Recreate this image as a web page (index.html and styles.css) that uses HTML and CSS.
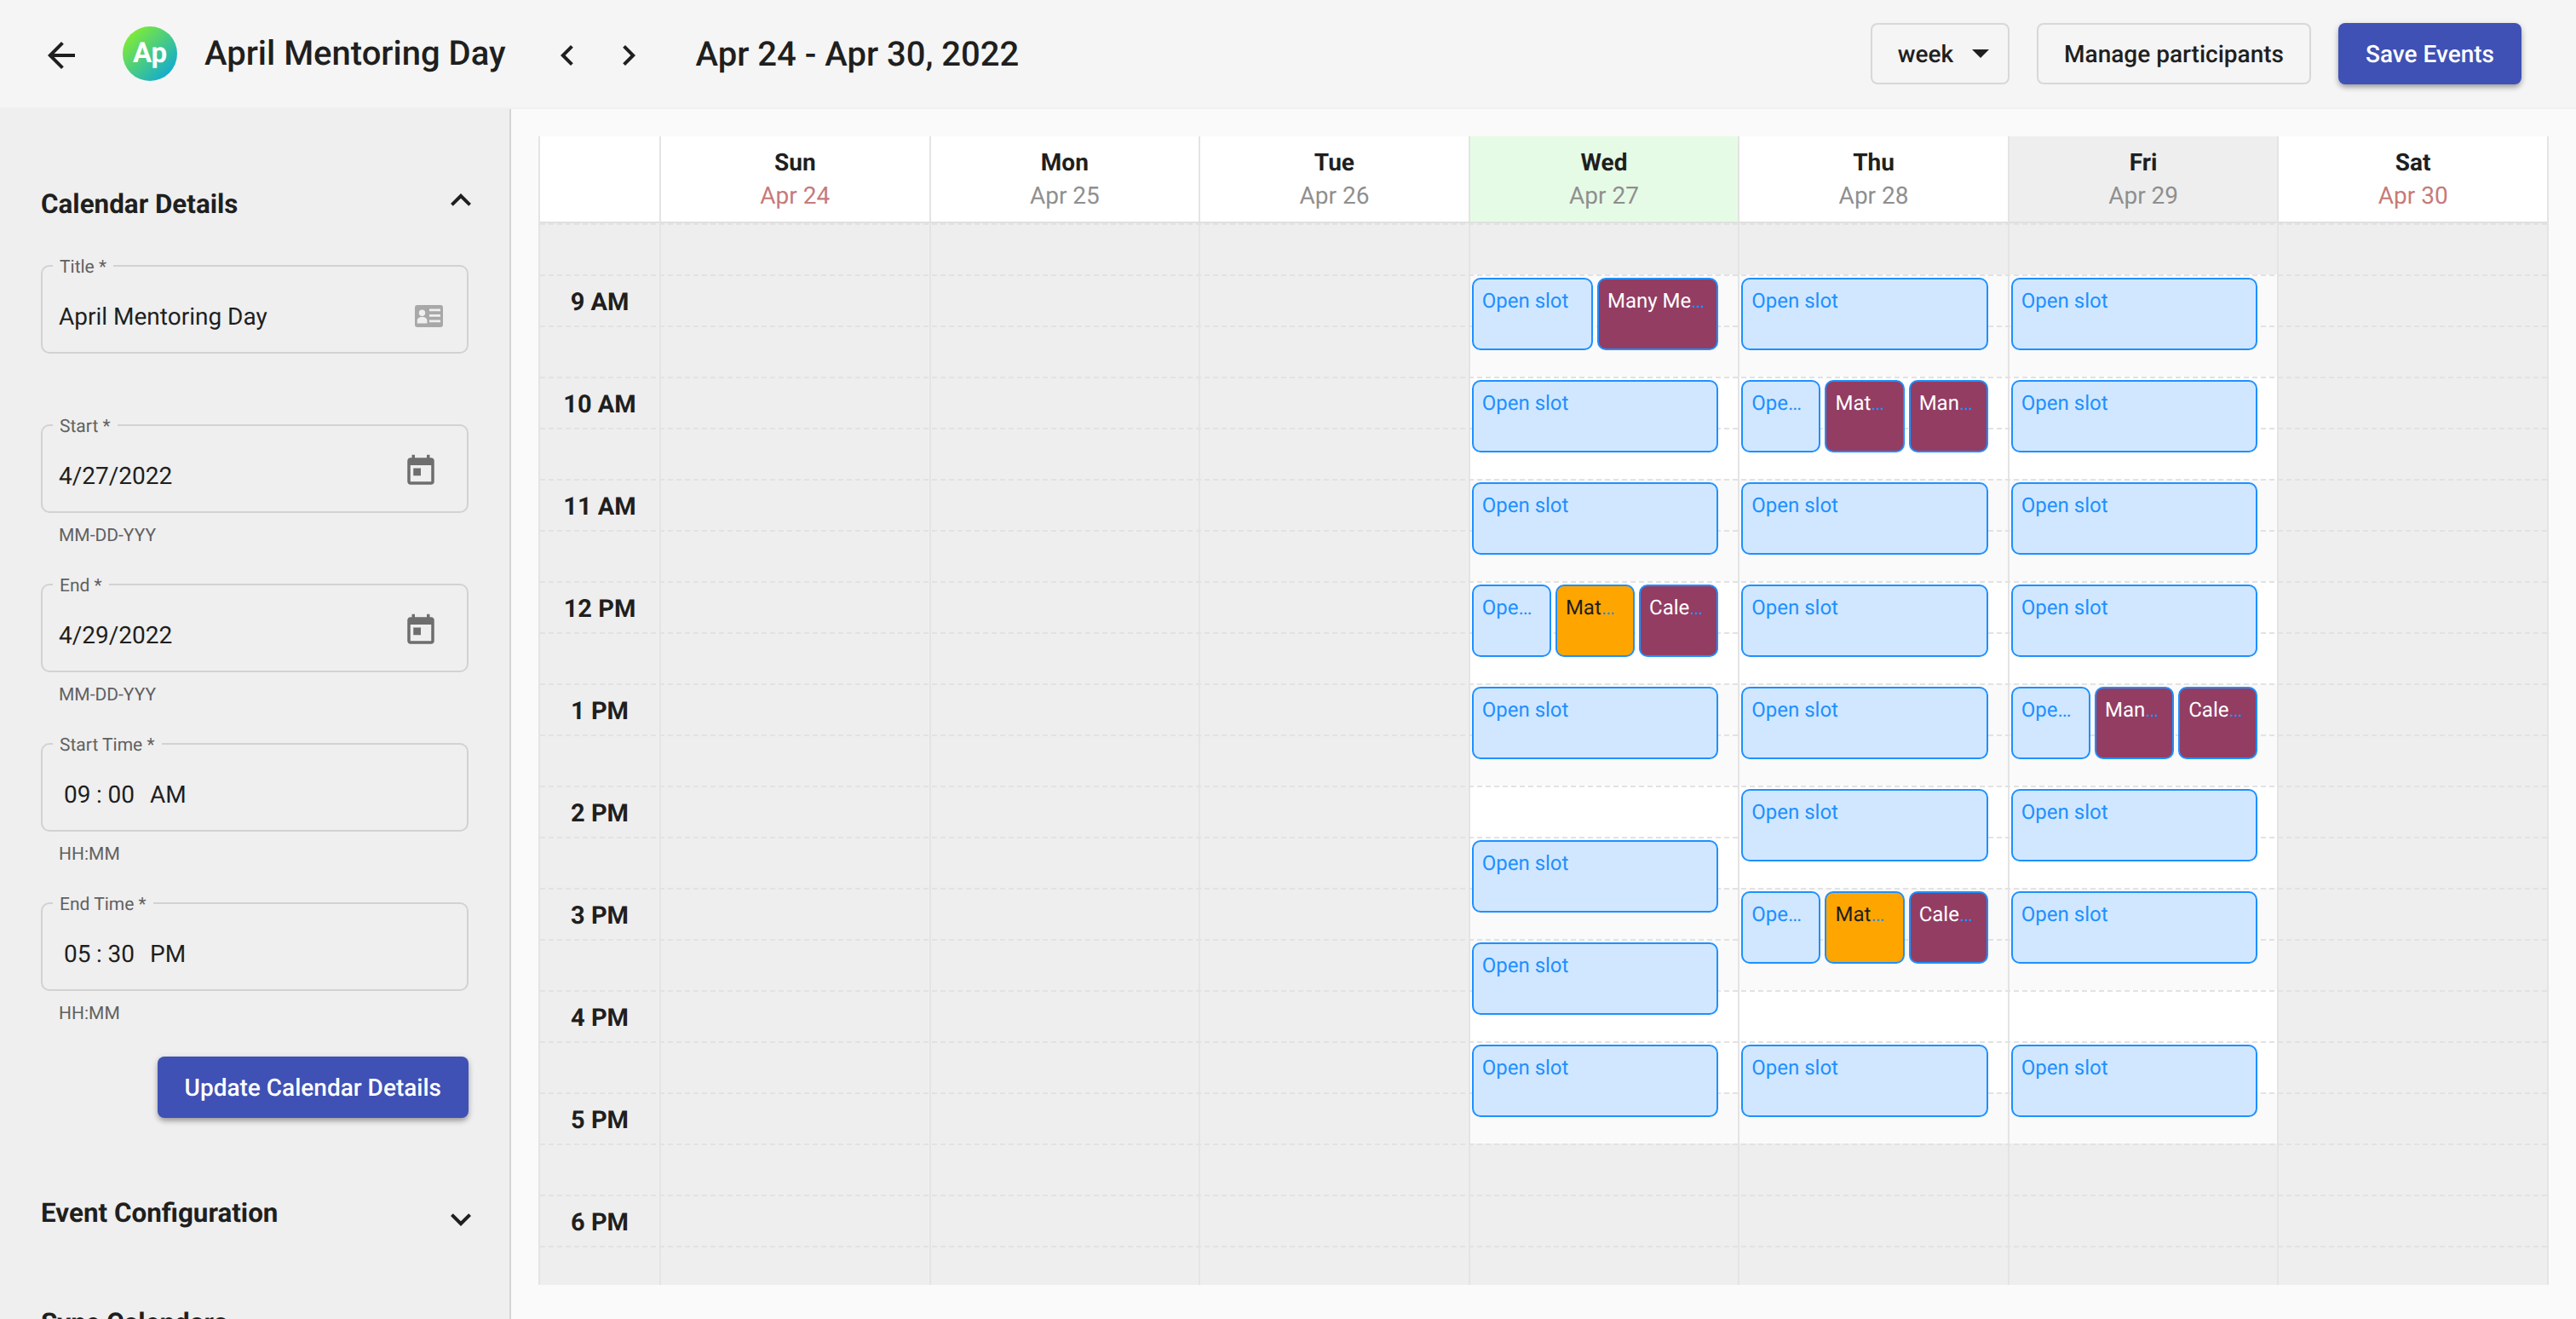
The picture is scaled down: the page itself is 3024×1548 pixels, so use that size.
FILE: index.html
```html
<!DOCTYPE html>
<html>
<head>
<meta charset="UTF-8">
<title>April Mentoring Day</title>
<link rel="stylesheet" href="styles.css">
</head>
<body>

<!-- top bar -->
<header class="topbar">
	<svg class="icon back" viewBox="0 0 24 24"><path d="M20 11H7.83l5.59-5.59L12 4l-8 8 8 8 1.41-1.41L7.83 13H20v-2z"/></svg>
	<div class="avatar">Ap</div>
	<h1 class="cal-name">April Mentoring Day</h1>
	<div class="pager">
		<svg class="icon" viewBox="0 0 24 24"><path d="M15.41 7.41 14 6l-6 6 6 6 1.41-1.41L10.83 12z"/></svg>
		<svg class="icon" viewBox="0 0 24 24"><path d="M10 6 8.59 7.41 13.17 12l-4.58 4.59L10 18l6-6z"/></svg>
	</div>
	<div class="range">Apr 24 - Apr 30, 2022</div>
	<div class="actions">
		<button type="button" class="btn outline view-btn">week
			<svg class="caret" viewBox="7 10 10 5"><path d="M7 10l5 5 5-5z"/></svg>
		</button>
		<button type="button" class="btn outline">Manage participants</button>
		<button type="button" class="btn primary">Save Events</button>
	</div>
</header>

<div class="layout">

	<!-- left panel -->
	<aside class="sidebar">
		<div class="section-head first">
			<h2>Calendar Details</h2>
			<svg class="icon expand up" viewBox="0 0 24 24"><path d="M12 8l-6 6 1.41 1.41L12 10.83l4.59 4.58L18 14z"/></svg>
		</div>

		<div class="field">
			<span class="field-label">Title *</span>
			<span class="field-value">April Mentoring Day</span>
			<svg class="card-icon" viewBox="0 0 33 26"><path fill-rule="evenodd" d="M3 0h27a3 3 0 0 1 3 3v20a3 3 0 0 1-3 3H3a3 3 0 0 1-3-3V3a3 3 0 0 1 3-3zM8.500 5.500a3.700 3.700 0 1 0 0 7.400a3.700 3.700 0 0 0 0-7.400zM2.800 21.500h11.600v-3.500c0-2.500-2.800-4-5.800-4s-5.800 1.500-5.800 4zM17 4.500v2.800h13V4.500zM17 11v2.800h13V11zM17 17.500v2.800h13v-2.800z"/></svg>
		</div>
		<div class="hint"></div>

		<div class="field">
			<span class="field-label">Start *</span>
			<span class="field-value">4/27/2022</span>
			<svg class="field-icon" viewBox="0 0 24 24"><path d="M19 3h-1V1h-2v2H8V1H6v2H5c-1.110 0-1.990.9-1.990 2L3 19c0 1.100.89 2 2 2h14c1.100 0 2-.9 2-2V5c0-1.100-.9-2-2-2zm0 16H5V8h14v11zM7 10h5v5H7z"/></svg>
		</div>
		<div class="hint">MM-DD-YYY</div>

		<div class="field">
			<span class="field-label">End *</span>
			<span class="field-value">4/29/2022</span>
			<svg class="field-icon" viewBox="0 0 24 24"><path d="M19 3h-1V1h-2v2H8V1H6v2H5c-1.110 0-1.990.9-1.990 2L3 19c0 1.100.89 2 2 2h14c1.100 0 2-.9 2-2V5c0-1.100-.9-2-2-2zm0 16H5V8h14v11zM7 10h5v5H7z"/></svg>
		</div>
		<div class="hint">MM-DD-YYY</div>

		<div class="field">
			<span class="field-label">Start Time *</span>
			<span class="field-value time"><span>09</span><span class="colon">:</span><span>00</span><span class="ampm">AM</span></span>
		</div>
		<div class="hint">HH:MM</div>

		<div class="field">
			<span class="field-label">End Time *</span>
			<span class="field-value time"><span>05</span><span class="colon">:</span><span>30</span><span class="ampm">PM</span></span>
		</div>
		<div class="hint">HH:MM</div>

		<div class="update-row">
			<button type="button" class="btn primary">Update Calendar Details</button>
		</div>

		<div class="section-head second">
			<h2>Event Configuration</h2>
			<svg class="icon expand down" viewBox="0 0 24 24"><path d="M16.590 8.590 12 13.170 7.410 8.590 6 10l6 6 6-6z"/></svg>
		</div>
		<div class="section-head third">
			<h2>Sync Calendars</h2>
		</div>
	</aside>

	<!-- calendar -->
	<main class="main">
		<div class="calendar">
			<div class="cal-head">
				<div class="corner"></div>
				<div class="day-head weekend"><b>Sun</b><span>Apr 24</span></div>
				<div class="day-head"><b>Mon</b><span>Apr 25</span></div>
				<div class="day-head"><b>Tue</b><span>Apr 26</span></div>
				<div class="day-head today"><b>Wed</b><span>Apr 27</span></div>
				<div class="day-head"><b>Thu</b><span>Apr 28</span></div>
				<div class="day-head shaded"><b>Fri</b><span>Apr 29</span></div>
				<div class="day-head weekend"><b>Sat</b><span>Apr 30</span></div>
			</div>

			<div class="cal-body">
				<div class="lines">
					<i></i><i></i><i></i><i></i><i></i><i></i><i></i>
					<i></i><i></i><i></i><i></i><i></i><i></i><i></i>
					<i></i><i></i><i></i><i></i><i></i><i></i><i></i>
				</div>

				<div class="hours">
					<div>9 AM</div><div>10 AM</div><div>11 AM</div><div>12 PM</div>
					<div>1 PM</div><div>2 PM</div><div>3 PM</div><div>4 PM</div>
					<div>5 PM</div><div>6 PM</div>
				</div>

				<div class="day"></div>
				<div class="day"></div>
				<div class="day"></div>

				<!-- Wed -->
				<div class="day work">
					<div class="slot-row">
						<div class="ev open"><span>Open slot</span></div>
						<div class="ev busy"><span>Many Meetings</span></div>
					</div>
					<div class="slot-row"><div class="ev open"><span>Open slot</span></div></div>
					<div class="slot-row"><div class="ev open"><span>Open slot</span></div></div>
					<div class="slot-row">
						<div class="ev open"><span>Open slot</span></div>
						<div class="ev held"><span>Mathew Lee</span></div>
						<div class="ev busy"><span>Calendar Sync</span></div>
					</div>
					<div class="slot-row"><div class="ev open"><span>Open slot</span></div></div>
					<div class="slot-row later"><div class="ev open"><span>Open slot</span></div></div>
					<div class="slot-row"><div class="ev open"><span>Open slot</span></div></div>
					<div class="slot-row"><div class="ev open"><span>Open slot</span></div></div>
				</div>

				<!-- Thu -->
				<div class="day work">
					<div class="slot-row"><div class="ev open"><span>Open slot</span></div></div>
					<div class="slot-row">
						<div class="ev open"><span>Open slot</span></div>
						<div class="ev busy"><span>Mathew Lee</span></div>
						<div class="ev busy"><span>Many Meetings</span></div>
					</div>
					<div class="slot-row"><div class="ev open"><span>Open slot</span></div></div>
					<div class="slot-row"><div class="ev open"><span>Open slot</span></div></div>
					<div class="slot-row"><div class="ev open"><span>Open slot</span></div></div>
					<div class="slot-row"><div class="ev open"><span>Open slot</span></div></div>
					<div class="slot-row">
						<div class="ev open"><span>Open slot</span></div>
						<div class="ev held"><span>Mathew Lee</span></div>
						<div class="ev busy"><span>Calendar Sync</span></div>
					</div>
					<div class="slot-row later"><div class="ev open"><span>Open slot</span></div></div>
				</div>

				<!-- Fri -->
				<div class="day work">
					<div class="slot-row"><div class="ev open"><span>Open slot</span></div></div>
					<div class="slot-row"><div class="ev open"><span>Open slot</span></div></div>
					<div class="slot-row"><div class="ev open"><span>Open slot</span></div></div>
					<div class="slot-row"><div class="ev open"><span>Open slot</span></div></div>
					<div class="slot-row">
						<div class="ev open"><span>Open slot</span></div>
						<div class="ev busy"><span>Many Meetings</span></div>
						<div class="ev busy"><span>Calendar Sync</span></div>
					</div>
					<div class="slot-row"><div class="ev open"><span>Open slot</span></div></div>
					<div class="slot-row"><div class="ev open"><span>Open slot</span></div></div>
					<div class="slot-row later"><div class="ev open"><span>Open slot</span></div></div>
				</div>

				<div class="day"></div>
			</div>
		</div>
	</main>
</div>

</body>
</html>
```

FILE: styles.css
```css
* {box-sizing: border-box;}
html, body {height: 100%;}
body {margin: 0; overflow: hidden; background: #fafafa; color: #1f1f1f; font-family: Roboto, "Liberation Sans", sans-serif; font-size: 28px; text-rendering: geometricPrecision;}
h1, h2 {margin: 0;}
.icon {display: block; width: 48px; height: 48px; fill: #1f1f1f; flex: none;}

/* top bar */
.topbar {display: flex; align-items: center; height: 128px; padding: 0 64px 0 48px; background: #f5f5f5; border-bottom: 2px solid #f0f0f0;}
.back {margin-top: 4px;}
.avatar {width: 64px; height: 64px; margin-left: 48px; border-radius: 50%; background: linear-gradient(135deg, #92f71c, #00a0ea); color: #fff; font-size: 33px; font-weight: 700; line-height: 64px; text-align: center;}
.cal-name {margin-left: 32px; font-size: 40px; font-weight: 500; line-height: 64px;}
.pager {display: flex; gap: 24px; margin: 4px 0 0 48px;}
.range {margin-left: 55px; font-size: 40px; font-weight: 500;}
.actions {display: flex; gap: 32px; margin-left: auto;}

.btn {height: 72px; padding: 0 30px; border: 2px solid transparent; border-radius: 8px; font: 500 28px Roboto, sans-serif; color: #1f1f1f; background: none; white-space: nowrap; text-rendering: geometricPrecision;}
.outline {border-color: #d8d8d8;}
.primary {background: #3f51b5; color: #fff; box-shadow: 0 4px 6px -1px rgba(0,0,0,.3), 0 2px 8px rgba(0,0,0,.14);}
.view-btn {display: flex; align-items: center; gap: 22px; padding-right: 22px;}
.caret {width: 20px; height: 10px; fill: #1f1f1f;}

.layout {display: flex; height: calc(100% - 128px);}

/* left panel */
.sidebar {flex: none; width: 600px; padding: 0 48px; background: #efefef; border-right: 2px solid #d4d4d4; overflow: hidden;}
.section-head {display: flex; justify-content: space-between; align-items: center;}
.section-head h2 {font-size: 31.400px; font-weight: 700; line-height: 40px;}
.section-head.first {margin-top: 92px; margin-bottom: 51px;}
.section-head.second {margin-top: 81px;}
.section-head.third {margin-top: 78px;}
.expand {margin-right: -15px;}
.expand.up {margin-top: -10px;}
.expand.down {margin-top: 14px;}

.field {position: relative; display: flex; align-items: center; height: 104px; padding: 16px 19px 0; border: 2px solid #d2d2d2; border-radius: 10px;}
.field-label {position: absolute; top: -11px; left: 12px; padding: 0 8px; background: #efefef; color: #616161; font-size: 21px; line-height: 24px;}
.field-value {flex: 1;}
.field-icon {display: block; width: 42px; height: 42px; margin: -10px 14px 0 0; fill: #6e6e6e; flex: none;}
.card-icon {display: block; width: 33px; height: 26px; margin-right: 9px; fill: #a8a8a8; flex: none;}
.hint {height: 83px; padding: 14px 21px 0; color: #616161; font-size: 21px; line-height: 26px;}
.time {display: flex; padding-left: 6px;}
.colon {width: 20px; text-align: center;}
.ampm {margin-left: 18px;}
.update-row {display: flex; justify-content: flex-end; margin-top: -6px;}

/* calendar */
.main {flex: 1; min-width: 0; padding: 32px 32px 0;}
.calendar {width: 2360px; height: 1348px; overflow: hidden; border-left: 2px solid #e4e4e4; border-right: 2px solid #e4e4e4;}
.cal-head {display: grid; grid-template-columns: 140px repeat(7, minmax(0, 1fr)); height: 102px; border-bottom: 2px solid #e0e0e0; background: #fff;}
.day-head {display: flex; flex-direction: column; align-items: center; padding-top: 11px; border-left: 2px solid #e4e4e4; line-height: 40px;}
.day-head b {font-weight: 700;}
.day-head span {margin-top: -1px; color: #8f8f8f;}
.day-head.weekend span {color: #c67a7a;}
.day-head.today {background: #e6fbe6;}
.day-head.shaded {background: #eeeeee;}

.cal-body {position: relative; display: grid; grid-template-columns: 140px repeat(7, minmax(0, 1fr)); height: 1246px; background: #eeeeee;}
.lines {position: absolute; top: 0; left: 0; right: 0; z-index: 1;}
.lines i {display: block; height: 60px; border-top: 2px dashed #e2e2e2;}
.hours {padding-top: 60px;}
.hours div {height: 120px; font-size: 29px; font-weight: 700; line-height: 66px; text-align: center;}
.day {display: flex; flex-direction: column; gap: 35px; padding: 64px 23px 0 2px; border-left: 2px solid #e4e4e4;}
.day.work {background: linear-gradient(#eeeeee 60px, #fafafa 60px 180px, #fff 180px 300px, #fafafa 300px 420px, #fff 420px 540px, #fafafa 540px 660px, #fff 660px 780px, #fafafa 780px 900px, #fff 900px 1020px, #fafafa 1020px 1080px, #eeeeee 1080px);}

.slot-row {position: relative; z-index: 2; display: flex; flex: none; gap: 5px; height: 85px;}
.slot-row.later {margin-top: 60px;}
.ev {flex: 1 1 0; min-width: 0; padding: 5px 10px; border: 2px solid #1e90ff; border-radius: 10px; color: #1e90ff; font-size: 24px; line-height: 40px; white-space: nowrap; overflow: hidden; text-overflow: ellipsis;}
.ev.open {background: #d0e7ff;}
.ev.busy {background: #933d63;}
.ev.busy span {color: #fff;}
.ev.held {background: #ffa500;}
.ev.held span {color: #1f1f1f;}
```
